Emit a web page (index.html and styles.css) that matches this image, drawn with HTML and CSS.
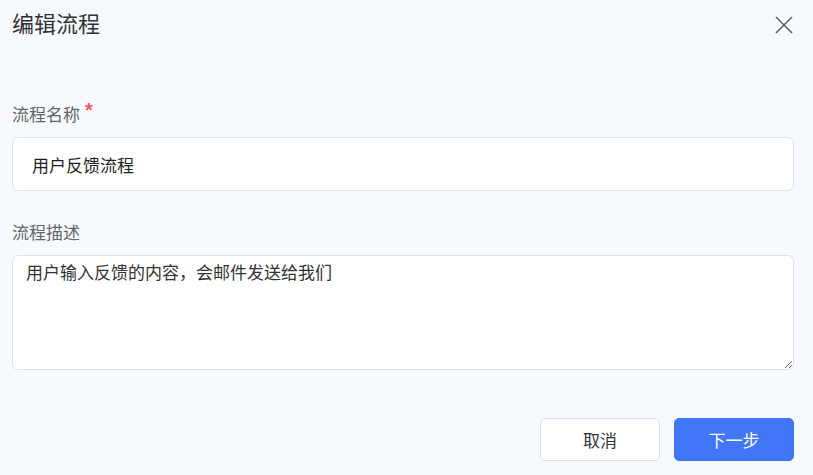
FILE: index.html
```html
<!DOCTYPE html>
<html>
<head>
	<title>编辑流程</title>
	<meta charset="utf-8">
	<link rel="stylesheet" href="styles.css">
</head>
<body>
<div id="dialog">
	<!-- 标题 -->
	<div class="dialogHeader">
		<span class="dialogTitle">编辑流程</span>
		<span class="closeBtn">
			<svg width="18" height="18" viewBox="0 0 18 18"><path d="M1 1 L17 17 M17 1 L1 17" stroke="#5f6470" stroke-width="1.6" fill="none"/></svg>
		</span>
	</div>

	<!-- 表单 -->
	<div class="formItem">
		<div class="formLabel">流程名称<span class="required">*</span></div>
		<input type="text" class="textInput" value="用户反馈流程" />
	</div>

	<div class="formItem second">
		<div class="formLabel">流程描述</div>
		<textarea class="textArea">用户输入反馈的内容，会邮件发送给我们</textarea>
	</div>

	<div class="dialogFooter">
		<button class="btn">取消</button>
		<button class="btn primary">下一步</button>
	</div>
</div>
</body>
</html>
```

FILE: styles.css
```css
html,body{
	padding: 0;
	margin: 0;
	height:100%;
}

body{
	background-color: #f6f9fe;
	font-family: "Noto Sans CJK SC", "Liberation Sans", sans-serif;
	color:#333;
}

#dialog{
	padding: 0 19px 0 12px;
}

.dialogHeader{
	height:45px;
	display: flex;
	align-items: center;
	justify-content: space-between;
}
.dialogTitle{
	font-size: 22px;
	line-height: 45px;
	color:#333;
}
.closeBtn{
	display: flex;
	margin-right: 1px;
	margin-top: 5px;
	cursor:pointer;
}

.formItem{
	margin-top: 57px;
}
.formItem.second{
	margin-top: 29px;
}
.formLabel{
	font-size: 17px;
	line-height: 24px;
	color:#666;
	margin-bottom: 11px;
}
.required{
	color:#f25c5c;
	font-family: "Liberation Sans", sans-serif;
	font-size: 20px;
	font-weight: bold;
	margin-left: 5px;
	vertical-align: 4px;
	line-height: 10px;
}

.textInput{
	display: block;
	box-sizing: border-box;
	width:100%;
	height:54px;
	padding: 0 19px;
	border: 1px solid #dfe2e8;
	border-radius: 6px;
	background-color: #fff;
	font-family: inherit;
	font-size: 17px;
	color:#1f1f1f;
	outline: none;
}

.textArea{
	display: block;
	box-sizing: border-box;
	width:100%;
	height:115px;
	padding: 4px 13px;
	border: 1px solid #dfe2e8;
	border-radius: 6px;
	background-color: #fff;
	font-family: inherit;
	font-size: 17px;
	line-height: 24px;
	color:#333;
	outline: none;
}

.dialogFooter{
	margin-top: 48px;
	display: flex;
	justify-content: flex-end;
	gap: 14px;
}
.btn{
	width:120px;
	height:43px;
	border: 1px solid #dcdfe6;
	border-radius: 5px;
	background-color: #fff;
	font-family: inherit;
	font-size: 17px;
	color:#333;
	cursor: pointer;
}
.btn.primary{
	background-color: #4177f6;
	border-color: #4177f6;
	color:#fff;
}
```
